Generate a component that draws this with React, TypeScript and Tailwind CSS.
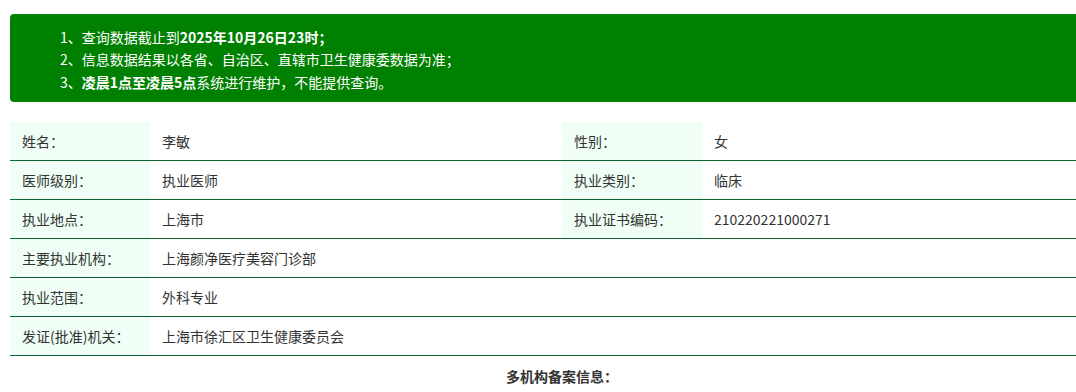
import React from "react";

const font = { fontFamily: '"Noto Sans CJK SC", "Noto Sans", sans-serif' };

function Row({ cells }: { cells: [string, string][] }) {
  return (
    <div className="flex h-[39px] border-b border-[#0e6632] text-[14px] text-[#333]">
      {cells.map(([label, value], i) => (
        <React.Fragment key={i}>
          <div className="flex w-[140px] shrink-0 items-center bg-[#effff6] pl-[12px]">{label}</div>
          <div className={`flex shrink-0 items-center pl-[12px] ${cells.length === 1 ? "flex-1" : "w-[412px]"}`}>{value}</div>
        </React.Fragment>
      ))}
    </div>
  );
}

export default function App() {
  return (
    <div className="h-[392px] w-[1076px] overflow-hidden bg-white" style={font}>
      <div className="w-[1114px] pl-[10px] pt-[14px]">
        <div className="rounded-[4px] bg-[#008000] pb-[9px] pl-[50px] pt-[12px] text-[14px] leading-[22.4px] text-white">
          <div>
            1、查询数据截止到<b>2025年10月26日23时；</b>
          </div>
          <div>2、信息数据结果以各省、自治区、直辖市卫生健康委数据为准；</div>
          <div>
            3、<b>凌晨1点至凌晨5点</b>系统进行维护，不能提供查询。
          </div>
        </div>
        <div className="mt-[20px]">
          <Row cells={[["姓名：", "李敏"], ["性别：", "女"]]} />
          <Row cells={[["医师级别：", "执业医师"], ["执业类别：", "临床"]]} />
          <Row cells={[["执业地点：", "上海市"], ["执业证书编码：", "210220221000271"]]} />
          <Row cells={[["主要执业机构：", "上海颜净医疗美容门诊部"]]} />
          <Row cells={[["执业范围：", "外科专业"]]} />
          <Row cells={[["发证(批准)机关：", "上海市徐汇区卫生健康委员会"]]} />
        </div>
        <div className="mt-[10px] text-center text-[14px] font-bold leading-[20px] text-[#333]">多机构备案信息：</div>
      </div>
    </div>
  );
}
